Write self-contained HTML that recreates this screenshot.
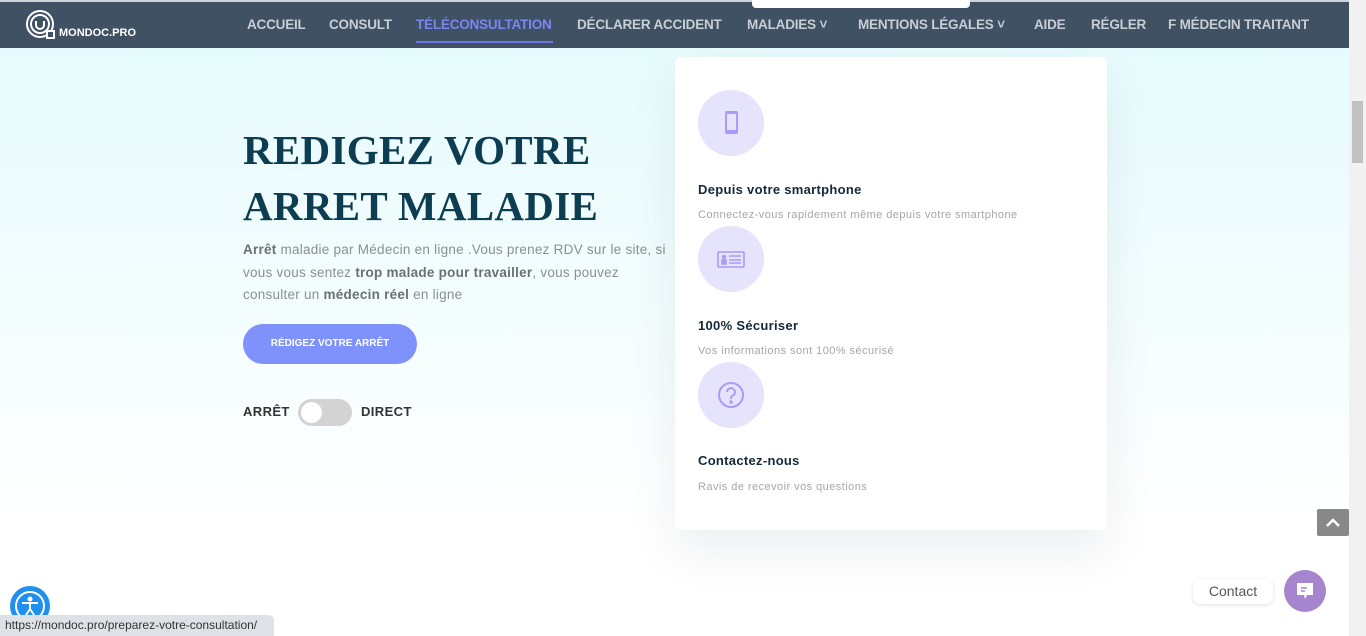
<!DOCTYPE html>
<html><head><meta charset="utf-8"><style>
*{margin:0;padding:0;box-sizing:border-box}
body{width:1366px;height:636px;overflow:hidden;font-family:"Liberation Sans",sans-serif;background:linear-gradient(180deg,#e4fbfd 0,#f3fdfe 300px,#fff 520px);position:relative}
.nav{position:absolute;left:0;top:0;width:1349px;height:48px;background:#3f5163;border-top:2px solid #cfd3d7}
.nav a{position:absolute;top:15px;color:#c7ced6;font-weight:bold;font-size:13.5px;letter-spacing:-0.2px;text-decoration:none;white-space:nowrap}
.nav a.act{color:#7a86f5}
.sb{position:absolute;right:0;top:0;width:17px;height:636px;background:#f1f1f1}
.sb .th{position:absolute;left:3px;top:101px;width:11px;height:62px;background:#c1c1c1}
h1{position:absolute;left:243px;top:122px;font-family:"Liberation Serif",serif;font-weight:bold;font-size:41px;line-height:56px;color:#0d3d50;letter-spacing:0.3px}
p.d{position:absolute;left:243px;top:239px;width:428px;font-size:13.5px;line-height:22.5px;color:#8a8f95;letter-spacing:0.25px}
p.d b{color:#6c7075}
.btn{position:absolute;left:243px;top:324px;width:174px;height:40px;border-radius:20px;background:#7f92fc;color:#fff;font-size:10px;font-weight:bold;text-align:center;line-height:40px}
.tg{position:absolute;top:404px;font-size:13px;font-weight:bold;color:#333;letter-spacing:0.4px}
.sw{position:absolute;left:298px;top:399px;width:54px;height:27px;border-radius:14px;background:#d3d3d3}
.sw i{position:absolute;left:3px;top:3px;width:21px;height:21px;border-radius:50%;background:#fff}
.card{position:absolute;left:675px;top:57px;width:432px;height:473px;background:#fff;border-radius:6px;box-shadow:0 20px 50px rgba(0,40,60,.08)}
.ic{position:absolute;left:23px;width:66px;height:66px;border-radius:50%;background:#e6e3fc}
.ic svg{position:absolute;left:17px;top:17px}
.t{position:absolute;left:23px;font-size:13px;font-weight:bold;color:#13293a;letter-spacing:0.3px}
.s{position:absolute;left:23px;font-size:11px;color:#a6a6a6;letter-spacing:0.45px}
.top{position:absolute;left:1317px;top:509px;width:32px;height:27px;background:#888;border-radius:2px}
.ct{position:absolute;left:1193px;top:579px;width:80px;height:25px;background:#fff;border-radius:8px;box-shadow:0 1px 4px rgba(0,0,0,.12);font-size:14px;color:#555;text-align:center;line-height:25px}
.cb{position:absolute;left:1284px;top:570px;width:42px;height:42px;border-radius:50%;background:#a685ce}
.acc{position:absolute;left:10px;top:586px;width:40px;height:40px;border-radius:50%;background:#1f8ff0}
.url{position:absolute;left:0;top:615px;width:274px;height:21px;background:#dee1e6;border-top-right-radius:5px;font-size:12px;color:#333;line-height:21px;padding-left:5px}
</style></head><body>
<div class="nav">
<svg style="position:absolute;left:25px;top:7px" width="32" height="32" viewBox="0 0 32 32" fill="none" stroke="#fff" stroke-width="2"><circle cx="15" cy="15" r="13"/><circle cx="15" cy="15" r="9"/><path d="M11 12v4a4 4 0 0 0 8 0v-4"/><rect x="22" y="22" width="7" height="7" fill="#3f5163"/></svg>
<span style="position:absolute;left:59px;top:25px;color:#fff;font-weight:bold;font-size:11px">MONDOC.PRO</span>
<a style="left:247px">ACCUEIL</a><a style="left:329px">CONSULT</a>
<a class="act" style="left:416px">TÉLÉCONSULTATION</a>
<div style="position:absolute;left:416px;top:39px;width:137px;height:2px;background:#6b78e5"></div>
<a style="left:577px">DÉCLARER ACCIDENT</a><a style="left:747px">MALADIES ˅</a><a style="left:858px">MENTIONS LÉGALES ˅</a><a style="left:1034px">AIDE</a><a style="left:1091px">RÉGLER</a><a style="left:1168px">F MÉDECIN TRAITANT</a>
</div>
<div style="position:absolute;left:752px;top:0;width:218px;height:8px;background:#fff;border-radius:0 0 4px 4px"></div>
<h1>REDIGEZ VOTRE<br>ARRET MALADIE</h1>
<p class="d"><b>Arrêt</b> maladie par Médecin en ligne .Vous prenez RDV sur le site, si vous vous sentez <b>trop malade pour travailler</b>, vous pouvez consulter un <b>médecin réel</b> en ligne</p>
<div class="btn">RÉDIGEZ VOTRE ARRÊT</div>
<span class="tg" style="left:243px">ARRÊT</span><div class="sw"><i></i></div><span class="tg" style="left:361px">DIRECT</span>
<div class="card">
<div class="ic" style="top:33px"><svg width="32" height="32" viewBox="0 0 32 32"><rect x="10" y="4" width="13" height="23" rx="2" fill="#a99bf7"/><rect x="12" y="7" width="9" height="16" fill="#e6e3fc"/></svg></div>
<div class="t" style="top:125px">Depuis votre smartphone</div>
<div class="s" style="top:152px">Connectez-vous rapidement même depuis votre smartphone</div>
<div class="ic" style="top:169px"><svg width="32" height="32" viewBox="0 0 32 32" fill="none" stroke="#a99bf7" stroke-width="1.6"><rect x="3" y="9" width="26" height="15" rx="1"/><circle cx="9" cy="14" r="1.5" fill="#a99bf7"/><rect x="7" y="17" width="4" height="4" fill="#a99bf7"/><path d="M14 13h12M14 17h12M14 20h12"/></svg></div>
<div class="t" style="top:261px">100% Sécuriser</div>
<div class="s" style="top:288px">Vos informations sont 100% sécurisé</div>
<div class="ic" style="top:305px"><svg width="32" height="32" viewBox="0 0 32 32" fill="none" stroke="#a99bf7" stroke-width="2"><circle cx="16" cy="16" r="12"/><path d="M12 13a4 4 0 1 1 5 4c-1 .5-1 1.5-1 3"/><circle cx="16" cy="23" r=".8" fill="#a99bf7"/></svg></div>
<div class="t" style="top:396px">Contactez-nous</div>
<div class="s" style="top:424px">Ravis de recevoir vos questions</div>
</div>
<div class="top"><svg width="32" height="27"><path d="M10 17l6-6 6 6" stroke="#fff" stroke-width="2.5" fill="none"/></svg></div>
<div class="ct">Contact</div>
<div class="cb"><svg width="42" height="42"><path d="M13 13h16v12h-6l-2 4-1-4h-7z" fill="#fff"/><path d="M17 18h6M17 21h4" stroke="#a685ce" stroke-width="1.5"/></svg></div>
<div class="acc"><svg width="40" height="40" fill="none" stroke="#fff" stroke-width="2"><circle cx="20" cy="20" r="14"/><circle cx="20" cy="13" r="1.5" fill="#fff"/><path d="M12 17h16M20 17v6l-4 6M20 23l4 6"/></svg></div>
<div class="url">https://mondoc.pro/preparez-votre-consultation/</div>
<div class="sb"><div class="th"></div></div>
</body></html>
